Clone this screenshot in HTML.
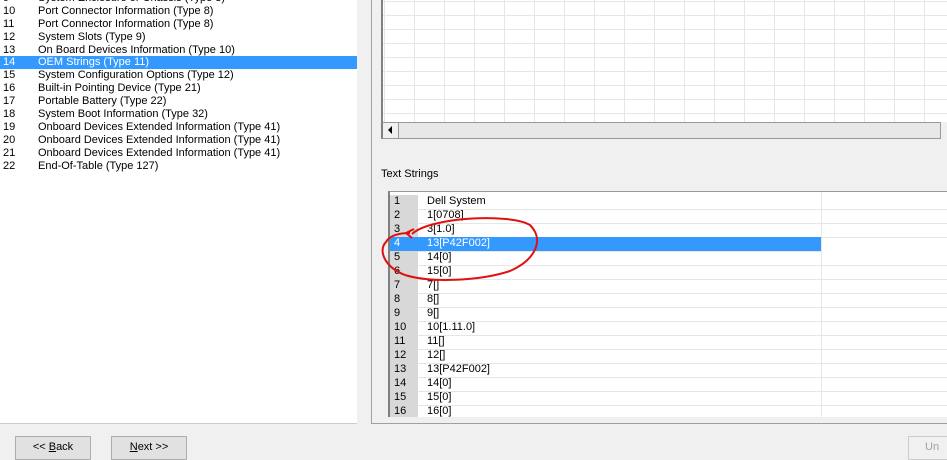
<!DOCTYPE html>
<html><head><style>
body{margin:0;width:947px;height:455px;background:#f0f0f0;font-family:"Liberation Sans",sans-serif;font-size:11px;position:relative;overflow:hidden;color:#000}
.abs{position:absolute}
.lrow{position:absolute;left:0;width:357px;height:13px;line-height:13px}
.lrow span{position:absolute}
.sel{background:#3399ff;color:#fff}
.grow{position:absolute;left:0;height:14px;line-height:13px;width:560px;border-bottom:1px solid #e6e6e6}
.gn{position:absolute;left:0;width:28px;background:#d8d8d8;height:14px;padding-left:4px;box-sizing:border-box}
.gt{position:absolute;left:37px}
.btn{position:absolute;top:436px;height:22px;width:74px;border:1px solid #adadad;background:#e1e1e1;text-align:center;line-height:20px;font-size:11px}
</style></head><body>
<div class="abs" style="left:0;top:0;width:357px;height:423px;background:#fff;border-bottom:1px solid #ccc"></div>
<div class="lrow" style="top:-8px"><span style="left:3px">9</span><span style="left:38px">System Enclosure or Chassis  (Type 3)</span></div>
<div class="lrow" style="top:5px"><span style="left:3px">10</span><span style="left:38px">Port Connector Information  (Type 8)</span></div>
<div class="lrow" style="top:18px"><span style="left:3px">11</span><span style="left:38px">Port Connector Information  (Type 8)</span></div>
<div class="lrow" style="top:31px"><span style="left:3px">12</span><span style="left:38px">System Slots  (Type 9)</span></div>
<div class="lrow" style="top:44px"><span style="left:3px">13</span><span style="left:38px">On Board Devices Information  (Type 10)</span></div>
<div class="lrow sel" style="top:56px"><span style="left:3px">14</span><span style="left:38px">OEM Strings  (Type 11)</span></div>
<div class="lrow" style="top:69px"><span style="left:3px">15</span><span style="left:38px">System Configuration Options  (Type 12)</span></div>
<div class="lrow" style="top:82px"><span style="left:3px">16</span><span style="left:38px">Built-in Pointing Device  (Type 21)</span></div>
<div class="lrow" style="top:95px"><span style="left:3px">17</span><span style="left:38px">Portable Battery  (Type 22)</span></div>
<div class="lrow" style="top:108px"><span style="left:3px">18</span><span style="left:38px">System Boot Information  (Type 32)</span></div>
<div class="lrow" style="top:121px"><span style="left:3px">19</span><span style="left:38px">Onboard Devices Extended Information  (Type 41)</span></div>
<div class="lrow" style="top:134px"><span style="left:3px">20</span><span style="left:38px">Onboard Devices Extended Information  (Type 41)</span></div>
<div class="lrow" style="top:147px"><span style="left:3px">21</span><span style="left:38px">Onboard Devices Extended Information  (Type 41)</span></div>
<div class="lrow" style="top:160px"><span style="left:3px">22</span><span style="left:38px">End-Of-Table  (Type 127)</span></div>

<div class="abs" style="left:371px;top:0;width:576px;height:423px;border-left:1px solid #a0a0a0;border-bottom:1px solid #a0a0a0"></div>
<div class="abs" style="left:381px;top:0;width:566px;height:122px;background-color:#fff;background-image:linear-gradient(90deg,#e6e6e6 1px,transparent 1px),linear-gradient(#e6e6e6 1px,transparent 1px);background-size:30px 14px;background-position:31px 1px;border-left:2px solid #808080"></div>
<div class="abs" style="left:381px;top:122px;width:557px;height:15px;background:#e8e8e8;border:1px solid #999;border-left:2px solid #808080"></div>
<div class="abs" style="left:383px;top:123px;width:15px;height:15px;border-right:1px solid #999;background:#f0f0f0"></div>
<div class="abs" style="left:388px;top:126px;width:0;height:0;border-top:4px solid transparent;border-bottom:4px solid transparent;border-right:4px solid #000"></div>

<div class="abs" style="left:381px;top:168px;font-size:11px">Text Strings</div>
<div class="abs" style="left:388px;top:191px;width:559px;height:225px;background:#fff;border-top:1px solid #999;border-left:2px solid #808080;overflow:hidden">
<div class="abs" style="left:431px;top:0;width:1px;height:225px;background:#e6e6e6"></div>
<div class="grow" style="top:3px"><div class="gn">1</div><div class="gt">Dell System</div></div>
<div class="grow" style="top:17px"><div class="gn">2</div><div class="gt">1[0708]</div></div>
<div class="grow" style="top:31px"><div class="gn">3</div><div class="gt">3[1.0]</div></div>
<div class="grow" style="top:45px;width:431px;background:#3399ff;color:#fff"><div class="gn" style="background:#3399ff">4</div><div class="gt">13[P42F002]</div></div>
<div class="grow" style="top:59px"><div class="gn">5</div><div class="gt">14[0]</div></div>
<div class="grow" style="top:73px"><div class="gn">6</div><div class="gt">15[0]</div></div>
<div class="grow" style="top:87px"><div class="gn">7</div><div class="gt">7[]</div></div>
<div class="grow" style="top:101px"><div class="gn">8</div><div class="gt">8[]</div></div>
<div class="grow" style="top:115px"><div class="gn">9</div><div class="gt">9[]</div></div>
<div class="grow" style="top:129px"><div class="gn">10</div><div class="gt">10[1.11.0]</div></div>
<div class="grow" style="top:143px"><div class="gn">11</div><div class="gt">11[]</div></div>
<div class="grow" style="top:157px"><div class="gn">12</div><div class="gt">12[]</div></div>
<div class="grow" style="top:171px"><div class="gn">13</div><div class="gt">13[P42F002]</div></div>
<div class="grow" style="top:185px"><div class="gn">14</div><div class="gt">14[0]</div></div>
<div class="grow" style="top:199px"><div class="gn">15</div><div class="gt">15[0]</div></div>
<div class="grow" style="top:213px"><div class="gn">16</div><div class="gt">16[0]</div></div>
</div>
<svg class="abs" style="left:370px;top:205px" width="180" height="85">
<path d="M42 29 C60 12,140 8,160 20 C175 35,165 55,140 66 C110 76,60 78,35 70 C14 62,8 45,16 37 C20 30,30 28,40 28" fill="none" stroke="#e01010" stroke-width="2"/>
<path d="M36 28 L44 24 M36 28 L42 33" stroke="#e01010" stroke-width="2"/>
</svg>

<div class="btn" style="left:15px">&lt;&lt; <u>B</u>ack</div>
<div class="btn" style="left:111px"><u>N</u>ext &gt;&gt;</div>
<div class="btn" style="left:908px;color:#a0a0a0;border-color:#ccc;background:#f0f0f0;text-align:left;padding-left:16px">Un</div>
</body></html>
